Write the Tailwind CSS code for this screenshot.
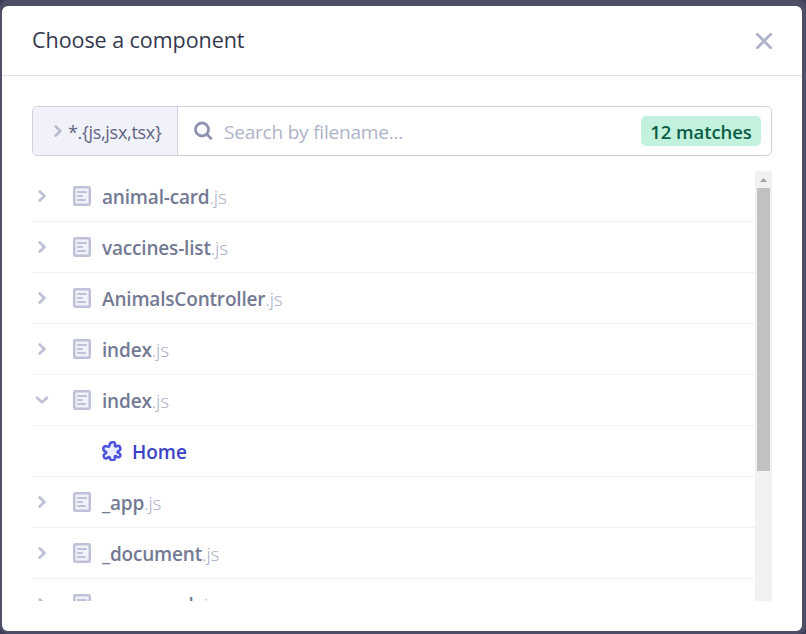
<!DOCTYPE html>
<html lang="en">
<head>
<meta charset="utf-8">
<title>Choose a component</title>
<script src="https://cdn.jsdelivr.net/npm/@tailwindcss/browser@4"></script>
</head>
<body class="h-[634px] w-[806px] overflow-hidden bg-[#3c3f57] font-['Open_Sans','Noto_Sans',sans-serif]">
<svg class="hidden">
  <symbol id="right" viewBox="0 0 20 20"><path d="M7.700 5.400 12.400 10l-4.700 4.600" fill="none" stroke="currentColor" stroke-width="2.800" stroke-linecap="round" stroke-linejoin="round"/></symbol>
  <symbol id="down" viewBox="0 0 20 20"><path d="M5 7.700 10 12.300l5-4.600" fill="none" stroke="currentColor" stroke-width="2.800" stroke-linecap="round" stroke-linejoin="round"/></symbol>
  <symbol id="file" viewBox="0 0 18 20"><rect x="1.250" y="1.250" width="15.500" height="17.500" rx="1" fill="#f1f2f9" stroke="currentColor" stroke-width="2.500"/><path d="M5 6h8M5 10h4M5 14h7" stroke="currentColor" stroke-width="2.200" stroke-linecap="round"/></symbol>
</svg>
<main class="h-[634px] rounded-lg bg-[#4c4f66] pt-1.5 pl-0.5">
<section class="h-[625px] w-[800px] rounded-md bg-white">
  <header class="flex h-[70px] items-center justify-between border-b border-[#e1e1ec] pr-[30px] pl-[30px]">
    <h1 class="-mt-0.5 text-[21.5px] leading-[30px] tracking-[-0.05px] text-[#33374d]">Choose a component</h1>
    <svg class="size-4 text-[#aeb1ca]" viewBox="0 0 16 16"><path d="M1.300 1.300l13.400 13.400M14.700 1.300 1.300 14.700" stroke="currentColor" stroke-width="2.800" stroke-linecap="round"/></svg>
  </header>
  <div class="px-[30px] pt-[30px]">
    <div class="flex h-[50px] overflow-hidden rounded-[5px] border border-[#d0d0e0]">
      <div class="flex w-[145px] shrink-0 items-center border-r border-[#d0d0e0] bg-[#f1f2f9] pl-[15px] text-[18px] tracking-[-0.3px] text-[#5f6484]"><svg class="size-5 shrink-0 text-[#b9bbd2]"><use href="#right"/></svg><span class="pt-0.5">*.{js,jsx,tsx}</span></div>
      <div class="flex flex-1 items-center pr-[10px] pl-[15px]">
        <svg class="size-5 text-[#8f93b2]" viewBox="0 0 20 20"><circle cx="9" cy="8.500" r="6.500" fill="none" stroke="currentColor" stroke-width="2.800"/><path d="m14 13.500 4 4" stroke="currentColor" stroke-width="2.800" stroke-linecap="round"/></svg>
        <span class="ml-[11px] flex-1 pt-0.5 text-[19px] tracking-[-0.2px] text-[#aeb3ca]">Search by filename...</span>
        <span class="flex h-[30px] w-[120px] items-center justify-center rounded-[5px] bg-[#c2f2dd] pt-0.5 text-[18.500px] font-semibold tracking-[-0.1px] text-[#0b5c45]">12 matches</span>
      </div>
    </div>
    <div class="mt-[15px] flex h-[430px] overflow-hidden">
      <ul id="files" class="flex-1"></ul>
      <div class="flex w-[17px] flex-col items-center bg-[#f1f1f1]">
        <svg class="h-[17px] w-[17px] shrink-0" viewBox="0 0 17 17"><path d="M5 11 8.500 7 12 11z" fill="#a3a3a3"/></svg>
        <div class="h-[283px] w-[13px] bg-[#c1c1c1]"></div>
      </div>
    </div>
  </div>
</section>
</main>
<script>
const names = ['animal-card','vaccines-list','AnimalsController','index','index',null,'_app','_document','user-mock'];
document.getElementById('files').innerHTML = names.map((n, i) => n === null
  ? `<li class="flex h-[51px] items-center border-b border-[#f1f2f9] pl-[70px] text-[19px] font-semibold text-[#3b43c4]"><svg class="size-5 text-[#4b52dd]" viewBox="0 0 20 20"><path d="M7.500 4.500C7.500 1 12 0 13 2.500c.4 1.300-.6 2 .2 2.700.9.700 1.500-.5 2.800-.4 2.800.4 3.200 4 .8 5-1 .4-1.500.5-1.200 1.500.3.800 2 .7 2.500 1.800 1 2-.8 3.800-2.700 3-1-.4-1.400-1.600-2.300-1.100-.9.500 0 1.500-.1 2.400-.4 2.300-4.200 2.400-5 .2-.4-1-.6-2-1.500-1.600-1 .4-1.100 1.800-2.500 1.600-2.500-.3-3.200-3.700-1.200-4.800.9-.5 1.700-.7 1.500-1.600-.2-.9-1.800-.7-2.500-1.700C.5 7 2.200 4.500 4.500 5.300c1.200.4 3 1.200 3-.8Z" fill="#eceefd" stroke="currentColor" stroke-width="2.500" stroke-linejoin="round"/></svg><span class="ml-[10px] pt-0.5">Home</span></li>`
  : `<li class="flex h-[51px] items-center border-b border-[#f1f2f9] text-[19px] tracking-[-0.18px] text-[#747994]"><svg class="size-5 text-[#bfc1d8]"><use href="#${i === 4 ? 'down' : 'right'}"/></svg><svg class="ml-[21px] h-5 w-[18px] text-[#bfc1d8]"><use href="#file"/></svg><span class="ml-[11px] pt-0.5 font-semibold ${i === 8 ? 'tracking-[0.1px]' : ''}">${n}</span><span class="pt-0.5 font-light text-[#a5abc5]">.js</span></li>`).join('');
</script>
</body>
</html>
